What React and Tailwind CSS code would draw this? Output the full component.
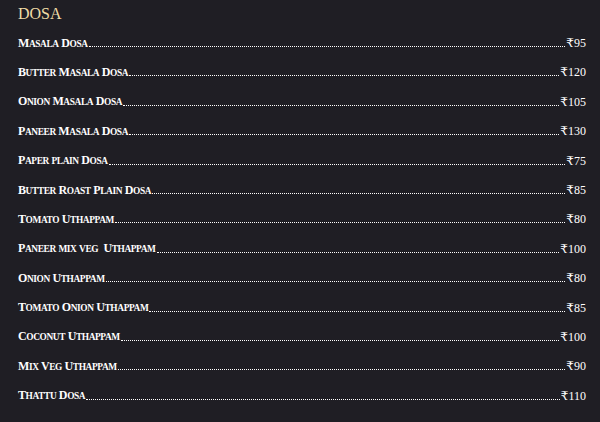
import React from "react";

const items = [
  ["Masala Dosa", "₹95"],
  ["Butter Masala Dosa", "₹120"],
  ["Onion Masala Dosa", "₹105"],
  ["Paneer Masala Dosa", "₹130"],
  ["Paper plain Dosa", "₹75"],
  ["Butter Roast Plain Dosa", "₹85"],
  ["Tomato Uthappam", "₹80"],
  ["Paneer mix veg\u00a0 Uthappam", "₹100"],
  ["Onion Uthappam", "₹80"],
  ["Tomato Onion Uthappam", "₹85"],
  ["Coconut Uthappam", "₹100"],
  ["Mix Veg Uthappam", "₹90"],
  ["Thattu Dosa", "₹110"],
];

function SmallCaps({ text }) {
  const runs = [];
  let cur = null;
  for (const ch of text) {
    const small = ch !== ch.toUpperCase();
    if (!cur || cur.small !== small) {
      cur = { small, s: "" };
      runs.push(cur);
    }
    cur.s += small ? ch.toUpperCase() : ch;
  }
  return (
    <span className="whitespace-pre font-bold text-[12px] tracking-[-0.4px]">
      {runs.map((r, i) =>
        r.small ? (
          <span key={i} className="text-[9.4px]">{r.s}</span>
        ) : (
          <span key={i}>{r.s}</span>
        )
      )}
    </span>
  );
}

export default function App() {
  return (
    <div
      className="w-[600px] h-[422px] bg-[#1f1e24] overflow-hidden pl-[18px] pr-[14px]"
      style={{ fontFamily: '"Liberation Serif", "DejaVu Serif", serif' }}
    >
      <div className="h-[19.6px] flex items-end">
        <span className="text-[16px] leading-none text-[#efdca6] mb-[-2px]">DOSA</span>
      </div>
      {items.map(([name, price]) => (
        <div key={name} className="h-[29.4px] flex items-end text-white leading-none">
          <SmallCaps text={name} />
          <span className="flex-1 border-b border-dotted border-white mb-[2px] mx-[1px]"></span>
          <span className="text-[12px]">{price}</span>
        </div>
      ))}
    </div>
  );
}
